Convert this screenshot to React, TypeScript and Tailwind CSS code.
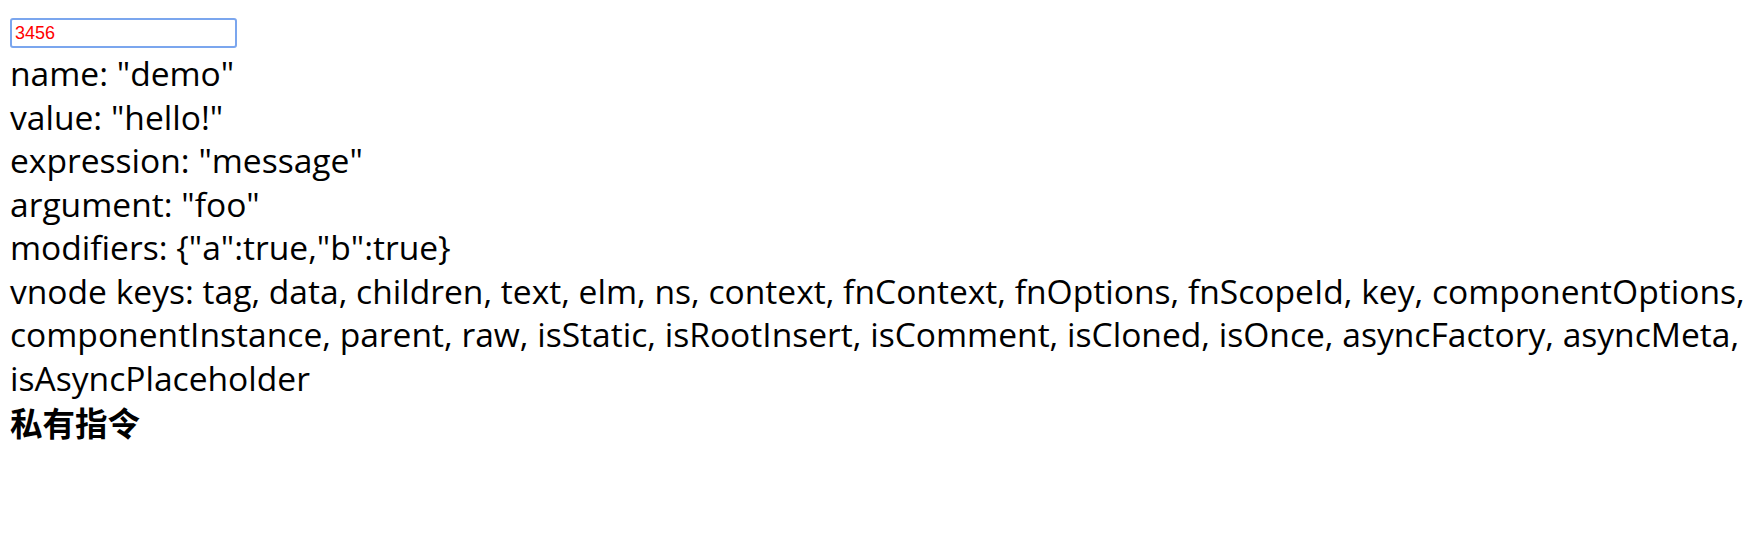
import React, { useState } from 'react'

const keysLines = [
    'vnode keys: tag, data, children, text, elm, ns, context, fnContext, fnOptions, fnScopeId, key, componentOptions,',
    'componentInstance, parent, raw, isStatic, isRootInsert, isComment, isCloned, isOnce, asyncFactory, asyncMeta,',
    'isAsyncPlaceholder',
]

const App: React.FC = () => {
    const [value, setValue] = useState('3456')

    const binding = {
        name: 'demo',
        value: 'hello!',
        expression: 'message',
        arg: 'foo',
        modifiers: { a: true, b: true },
    }

    return (
        <div className="w-full h-[538px] overflow-hidden bg-white px-[10px] pt-[18px] text-black">
            <input
                className="block w-[227px] h-[30px] border-2 border-[#7ba6ee] rounded-[3px] pl-[3px] text-[18px] text-[#ff0000] outline-none font-['Liberation_Sans',Arial,sans-serif]"
                value={value}
                onChange={(e) => setValue(e.target.value)}
            />
            <div className="mt-[4px] text-[33.6px] leading-[43.5px] whitespace-nowrap font-['Open_Sans','Noto_Sans_CJK_SC',sans-serif]">
                <div>name: {JSON.stringify(binding.name)}</div>
                <div>value: {JSON.stringify(binding.value)}</div>
                <div>expression: {JSON.stringify(binding.expression)}</div>
                <div>argument: {JSON.stringify(binding.arg)}</div>
                <div>modifiers: {JSON.stringify(binding.modifiers)}</div>
                {keysLines.map((line) => (
                    <div key={line}>{line}</div>
                ))}
                <div className="text-[32.5px] font-bold font-['Noto_Sans_CJK_SC',sans-serif]">私有指令</div>
            </div>
        </div>
    )
}

export default App
